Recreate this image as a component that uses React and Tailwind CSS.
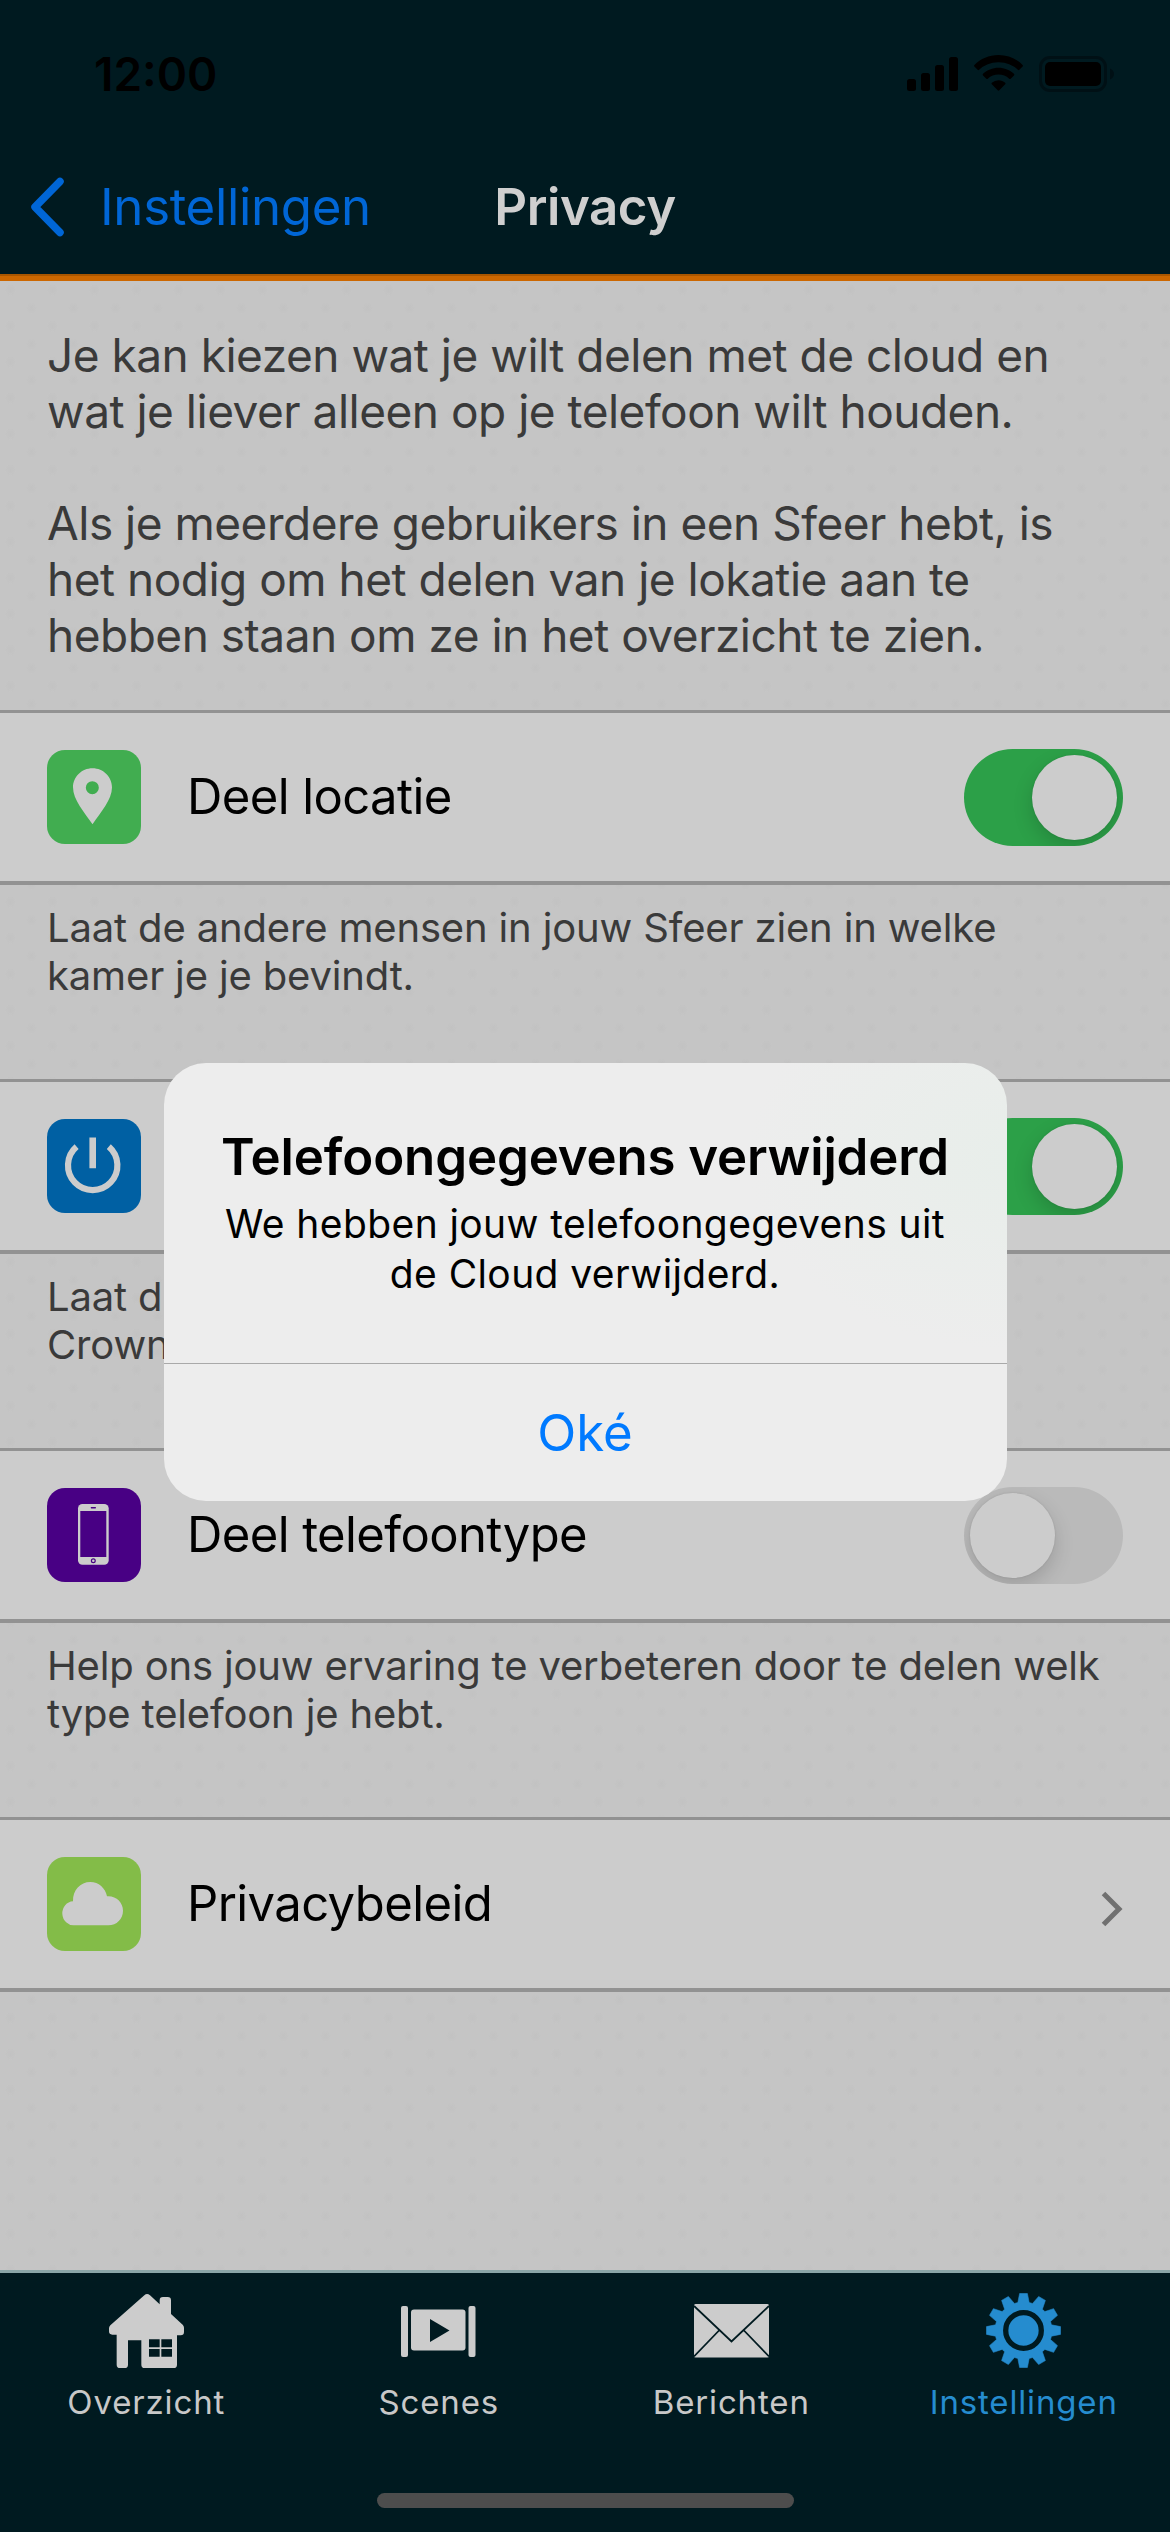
import React from "react";

const FONT = "font-['Inter','Liberation_Sans',sans-serif]";
const DOTS =
  "bg-[#c5c5c5] bg-[radial-gradient(circle_at_25%_25%,#c2c2c2_0,#c2c2c200_6px),radial-gradient(circle_at_75%_75%,#c2c2c2_0,#c2c2c200_6px)] bg-[length:42px_36px]";

function StatusBar() {
  return (
    <div className="flex h-[148px] items-center pl-[94px] pr-[55px]">
      <span className="text-[46px] leading-[56px] font-semibold text-black">12:00</span>
      <svg className="ml-auto" width="116" height="38" viewBox="0 0 116 38">
        <g fill="#000">
          <rect x="0" y="24" width="9" height="12" rx="2.5" />
          <rect x="14" y="18" width="9" height="18" rx="2.5" />
          <rect x="28" y="10" width="9" height="26" rx="2.5" />
          <rect x="42" y="2" width="9" height="34" rx="2.5" />
        </g>
      </svg>
      <div className="-ml-[49px] flex items-center">
        <svg width="49" height="38" viewBox="0 0 49 38">
          <path d="M24.5 0C34 0 42.500 3.800 48.600 9.900c.5.5.5 1.100 0 1.600l-3.200 3.300c-.5.500-1 .5-1.500 0A27.500 27.500 0 0 0 24.500 7.200 27.500 27.500 0 0 0 5.100 14.800c-.5.5-1 .5-1.500 0L.4 11.500c-.5-.5-.5-1.100 0-1.600C6.500 3.800 15 0 24.500 0z" />
          <path d="M24.500 12.700c6 0 11.400 2.300 15.500 6.100.5.500.5 1.100 0 1.600l-3.300 3.300c-.5.500-1 .5-1.500 0a15.800 15.800 0 0 0-21.400 0c-.5.500-1 .5-1.500 0L9 20.400c-.5-.5-.5-1.100 0-1.600 4.100-3.800 9.500-6.100 15.500-6.100z" />
          <path d="M24.500 25.200c2.500 0 4.900.9 6.700 2.500.5.500.5 1.100 0 1.600l-5.900 6c-.5.500-1.100.5-1.600 0l-5.900-6c-.5-.5-.5-1.100 0-1.600a10.200 10.200 0 0 1 6.700-2.500z" />
        </svg>
        <svg className="ml-[16px]" width="76" height="38" viewBox="0 0 76 38">
          <rect x="1.500" y="2.500" width="65" height="33" rx="9.500" fill="none" stroke="#001015" strokeWidth="3" />
          <rect x="6" y="7" width="56" height="24" rx="5" />
          <path d="M71 13.500c2.500 1 4 3 4 5.500s-1.500 4.500-4 5.500z" fill="#001015" />
        </svg>
      </div>
    </div>
  );
}

function Header() {
  return (
    <header className="h-[281px] shrink-0 border-b-[5px] border-[#cc6700] bg-[#001a20]">
      <div className="h-[276px] border-b-2 border-[#a95600]">
        <StatusBar />
        <div className="grid h-[117px] grid-cols-[1fr_auto_1fr] items-center text-[51px] leading-[60px]">
          <div className="flex items-center pl-[30px] text-[#0066d6]">
            <svg width="34" height="60" viewBox="0 0 34 60">
              <path d="M30 4.500 5 30l25 25.500" fill="none" stroke="currentColor" strokeWidth="7.500" strokeLinecap="round" strokeLinejoin="round" />
            </svg>
            <span className="ml-[36px] tracking-[-0.35px]">Instellingen</span>
          </div>
          <h1 className="font-semibold tracking-[-0.45px] text-[#cfcfcf]">Privacy</h1>
        </div>
      </div>
    </header>
  );
}

function PinIcon() {
  return (
    <svg width="94" height="94" viewBox="141 210 282 282">
      <path fillRule="evenodd" fill="#ccc" d="M277.500 265c33 0 58.500 26 58.500 57 0 38-34 75-58.500 111C253 397 219 360 219 322c0-31 25.500-57 58.500-57zM277 303.500a19.500 19.500 0 1 0 0 39 19.500 19.500 0 0 0 0-39z" />
    </svg>
  );
}

function PowerIcon() {
  return (
    <svg width="94" height="94" viewBox="0 0 94 94">
      <path d="M29.600 27.700a24.700 24.700 0 1 0 32.200 0" fill="none" stroke="#ccc" strokeWidth="6.200" />
      <path d="M45.700 18.500v30.700" stroke="#ccc" strokeWidth="6.600" />
    </svg>
  );
}

function PhoneIcon() {
  return (
    <svg width="94" height="94" viewBox="0 0 94 94">
      <rect x="31" y="16" width="30.700" height="60.700" rx="4.500" fill="#ccc" />
      <rect x="33.300" y="23" width="26" height="46" fill="#480084" />
      <rect x="43.700" y="19" width="5.300" height="1.500" rx=".7" fill="#480084" />
      <circle cx="46.300" cy="72.800" r="1.900" fill="none" stroke="#480084" strokeWidth="1.200" />
    </svg>
  );
}

function CloudIcon() {
  return (
    <svg width="94" height="94" viewBox="141 170 282 282">
      <path fill="#ccc" d="M223 375a34 36 0 0 1-4-72c-1-34 22-58 52-58 25 0 45 18 50 43 28-2 48 19 48 43s-19 44-44 44z" />
    </svg>
  );
}

function Toggle({ on }) {
  return (
    <div
      className={
        on
          ? "ml-auto flex h-[97px] w-[159px] items-center justify-end overflow-hidden rounded-full bg-[#2ca048] px-[6px]"
          : "ml-auto flex h-[97px] w-[159px] items-center overflow-hidden rounded-full bg-[#bababa] px-[6px]"
      }
    >
      <div className="size-[85px] rounded-full bg-[#ccc] shadow-[0_8px_20px_rgba(0,0,0,0.16),0_0_2px_rgba(0,0,0,0.12)]" />
    </div>
  );
}

function Row({ icon, tile, label, children }) {
  return (
    <div className="flex h-[175px] shrink-0 items-center border-t-[3px] border-b-4 border-[#929292] bg-[#ccc] px-[47px]">
      <div className={"size-[94px] overflow-hidden rounded-[18px] " + tile}>{icon}</div>
      <span className="ml-[46px] text-[49px] leading-[60px] tracking-[-0.6px] text-black">{label}</span>
      {children}
    </div>
  );
}

function Note({ lines }) {
  return (
    <div className="h-[194px] shrink-0 pt-[19px] pl-[47px] text-[40px] leading-[48px] tracking-[-0.16px] text-[#3a3a3a]">
      {lines.map((l) => (
        <p key={l}>{l}</p>
      ))}
    </div>
  );
}

function HouseIcon() {
  return (
    <svg width="75" height="75" viewBox="27 24 225 225">
      <path fill="#ccc" d="M133 31q8-8 17 0l29 27V46q0-10 10-10h14q10 0 10 10v41l35 32q4 4 4 9v13q0 10-10 10h-11v88q0 10-10 10h-87q-10 0-10-10v-73H84v73q0 10-10 10H60q-10 0-10-10v-90H37q-10 0-10-10v-9q0-5 4-9z" />
      <path fill="#001a20" d="M147 163h32v24h-32zM184 163h32v24h-32zM147 192h32v23h-32zM184 192h32v23h-32z" />
    </svg>
  );
}

function ScenesIcon() {
  return (
    <svg width="75" height="75" viewBox="0 0 75 75" fill="#ccc">
      <rect x="0" y="13" width="7" height="51" rx="2" />
      <rect x="10" y="16.500" width="54.500" height="41" rx="3" />
      <rect x="67.500" y="13" width="7" height="51" rx="2" />
      <path d="M29 26v23l19.500-11.500z" fill="#001a20" />
    </svg>
  );
}

function MailIcon() {
  return (
    <svg width="75" height="75" viewBox="0 0 75 75">
      <rect x="0" y="11" width="75" height="53.500" rx="1.500" fill="#ccc" />
      <path d="M0 13 37.500 48.500 75 13M25.500 37 0 63.500M49.500 37 75 63.500" fill="none" stroke="#001a20" strokeWidth="1.800" />
    </svg>
  );
}

function GearIcon() {
  const pts = [];
  for (let i = 0; i < 12; i++) {
    [[-11.500, 28.500], [-6, 37.200], [6, 37.200], [11.500, 28.500]].forEach(([deg, r]) => {
      const a = ((i * 30 + deg) * Math.PI) / 180;
      pts.push(`${(37.5 + r * Math.sin(a)).toFixed(2)},${(37.5 - r * Math.cos(a)).toFixed(2)}`);
    });
  }
  return (
    <svg width="75" height="75" viewBox="0 0 75 75">
      <polygon points={pts.join(" ")} fill="#258ccf" stroke="#258ccf" strokeWidth="0.600" strokeLinejoin="round" />
      <circle cx="37.500" cy="37.500" r="17.800" fill="none" stroke="#001a20" strokeWidth="5.300" />
    </svg>
  );
}

function TabBar() {
  const tabs = [
    ["Overzicht", <HouseIcon />, "text-[#c8c8c8]"],
    ["Scenes", <ScenesIcon />, "text-[#c8c8c8]"],
    ["Berichten", <MailIcon />, "text-[#c8c8c8]"],
    ["Instellingen", <GearIcon />, "text-[#258ccf]"],
  ];
  return (
    <nav className="flex h-[262px] shrink-0 flex-col items-center border-t-[3px] border-[#8aa6a8] bg-[#001a20]">
      <div className="grid w-full grid-cols-4 pt-[20px]">
        {tabs.map(([label, icon, color]) => (
          <div key={label} className="flex flex-col items-center">
            {icon}
            <span className={"mt-[14px] text-[33px] leading-[40px] tracking-[0.85px] " + color}>{label}</span>
          </div>
        ))}
      </div>
      <div className="mt-auto mb-[24px] h-[15px] w-[417px] rounded-full bg-[#4d4d4d]" />
    </nav>
  );
}

function Alert() {
  return (
    <div className="absolute inset-0 flex items-start justify-center pt-[1063px]">
      <div className="flex h-[438px] w-[843px] flex-col overflow-hidden rounded-[42px] bg-[#ededed] bg-[radial-gradient(ellipse_260px_190px_at_100%_22%,#e8eeea,#ededed00)] text-center text-black">
        <div className="h-[300px] pt-[64px]">
          <h2 className="text-[51px] leading-[60px] font-semibold tracking-[-0.15px]">Telefoongegevens verwijderd</h2>
          <p className="mt-[12px] text-[39px] leading-[50px] tracking-[0.4px]">
            We hebben jouw telefoongegevens uit
            <br />
            de Cloud verwijderd.
          </p>
        </div>
        <button className="flex flex-1 items-center justify-center border-t border-[#a9a9a9] text-[51px] leading-[60px] text-[#007aff]">
          Oké
        </button>
      </div>
    </div>
  );
}

export default function App() {
  return (
    <div className={"relative flex h-[2532px] w-[1170px] flex-col overflow-hidden " + FONT}>
      <Header />
      <main className={"flex flex-1 flex-col " + DOTS}>
        <div className="h-[429px] shrink-0 pt-[46px] pl-[47px] text-[46px] leading-[56px] tracking-[-0.5px] text-[#3a3a3a]">
          <p>Je kan kiezen wat je wilt delen met de cloud en</p>
          <p>wat je liever alleen op je telefoon wilt houden.</p>
          <p className="mt-[56px]">Als je meerdere gebruikers in een Sfeer hebt, is</p>
          <p>het nodig om het delen van je lokatie aan te</p>
          <p>hebben staan om ze in het overzicht te zien.</p>
        </div>
        <Row icon={<PinIcon />} tile="bg-[#41ad50]" label="Deel locatie">
          <Toggle on />
        </Row>
        <Note lines={["Laat de andere mensen in jouw Sfeer zien in welke", "kamer je je bevindt."]} />
        <Row icon={<PowerIcon />} tile="bg-[#0060a3]">
          <Toggle on />
        </Row>
        <Note lines={["Laat d", "Crown"]} />
        <Row icon={<PhoneIcon />} tile="bg-[#480084]" label="Deel telefoontype">
          <Toggle />
        </Row>
        <Note lines={["Help ons jouw ervaring te verbeteren door te delen welk", "type telefoon je hebt."]} />
        <Row icon={<CloudIcon />} tile="bg-[#83bc48]" label="Privacybeleid">
          <svg className="mt-[10px] ml-auto" width="22" height="36" viewBox="0 0 22 36">
            <path d="M2.500 2.500 18 18 2.500 33.500" fill="none" stroke="#707070" strokeWidth="5" />
          </svg>
        </Row>
      </main>
      <TabBar />
      <Alert />
    </div>
  );
}
